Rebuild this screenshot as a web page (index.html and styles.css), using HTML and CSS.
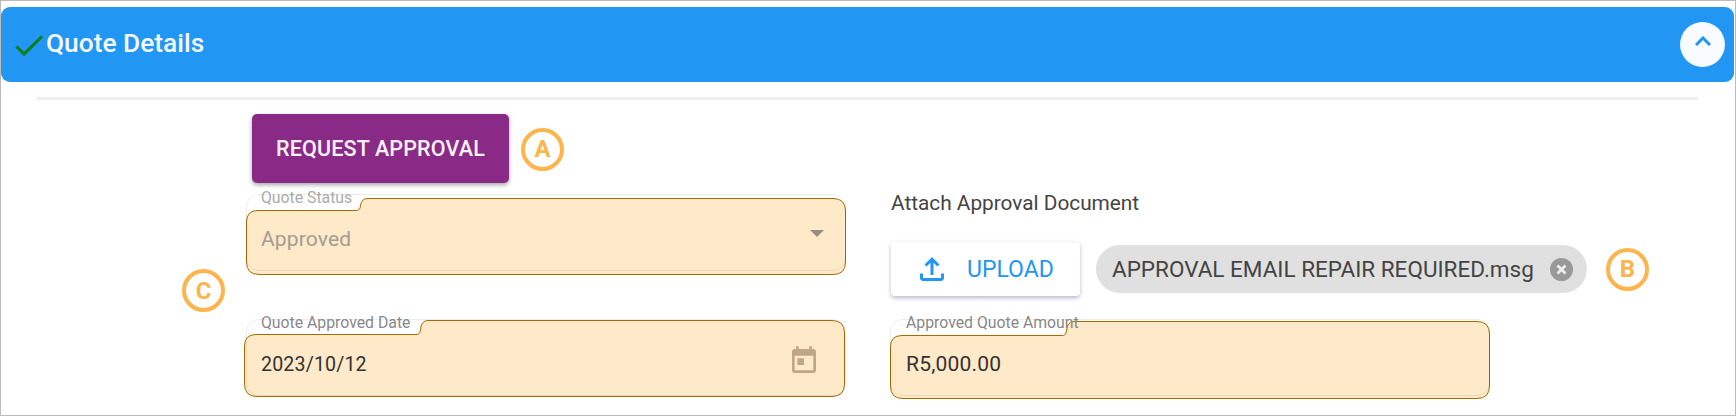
FILE: index.html
```html
<!DOCTYPE html>
<html lang="en">
<head>
    <meta charset="UTF-8">
    <title>Quote Details</title>
    <link rel="stylesheet" href="styles.css">
</head>
<body>
    <div class="page">
        <div class="panel-header">
            <svg class="check" width="28" height="21" viewBox="0 0 28 21"><path d="M1.5 11.5 L9 19 L27 1.5" fill="none" stroke="#0b7d12" stroke-width="3"/></svg>
            <h1 class="panel-title">Quote Details</h1>
            <button class="collapse-btn">
                <svg width="16" height="10" viewBox="0 0 16 10"><path d="M1 9 L8 2 L15 9" fill="none" stroke="#2196f3" stroke-width="3"/></svg>
            </button>
        </div>
        <div class="divider"></div>

        <div class="action-row">
            <button class="request-btn">REQUEST APPROVAL</button>
            <span class="badge">A</span>
        </div>

        <div class="form-grid">
            <div class="badge-cell"><span class="badge">C</span></div>

            <div class="field field-status">
                <svg class="field-shape" width="600" height="85" viewBox="0 0 600 85">
                    <path class="shape-fill" d="M.5 32 Q.5 20.5 12 20.5 H110 Q114 20.5 114.5 16 Q115 8.5 122 8.5 H587 Q599.5 8.5 599.5 21 V72 Q599.5 84.5 587 84.5 H13 Q.5 84.5 .5 72 Z"/>
                    <rect class="shape-outline" x=".5" y="4.5" width="599" height="76" rx="12"/>
                </svg>
                <label class="field-label">Quote Status</label>
                <div class="field-row">
                    <span class="field-value value-status">Approved</span>
                    <svg class="arrow" width="14" height="7" viewBox="0 0 14 7"><path d="M0 0 H14 L7 7 Z" fill="#9a8b84"/></svg>
                </div>
            </div>

            <div class="attach">
                <div class="attach-title">Attach Approval Document</div>
                <div class="attach-row">
                    <button class="upload-btn">
                        <svg width="36" height="36" viewBox="0 0 24 24"><path fill="#2196f3" d="M18 15v3H6v-3H4v3c0 1.1.9 2 2 2h12c1.1 0 2-.9 2-2v-3h-2zM7 9l1.41 1.41L11 7.83V16h2V7.83l2.59 2.58L17 9l-5-5-5 5z"/></svg>
                        <span>UPLOAD</span>
                    </button>
                    <div class="chip">
                        <span class="chip-text">APPROVAL EMAIL REPAIR REQUIRED.msg</span>
                        <svg class="chip-close" width="23" height="23" viewBox="0 0 23 23"><circle cx="11.5" cy="11.5" r="11.5" fill="#999"/><path d="M7.5 7.5 L15.5 15.5 M15.5 7.5 L7.5 15.5" stroke="#eee" stroke-width="2.8"/></svg>
                    </div>
                    <span class="badge">B</span>
                </div>
            </div>

            <div class="field field-date">
                <svg class="field-shape" width="602" height="85" viewBox="0 0 602 85">
                    <path class="shape-fill" d="M.5 31 Q.5 19.5 12 19.5 H172 Q176 19.5 176.5 15 Q177 5.5 184 5.5 H588 Q600.5 5.5 600.5 18 V69 Q600.5 81.5 588 81.5 H13 Q.5 81.5 .5 69 Z"/>
                    <rect class="shape-outline" x="2.5" y="4.5" width="599" height="76" rx="12"/>
                </svg>
                <label class="field-label">Quote Approved Date</label>
                <div class="field-row">
                    <span class="field-value value-date">2023/10/12</span>
                    <svg class="calendar" width="32" height="32" viewBox="0 0 24 24"><path fill="#bfa684" d="M19 3h-1V1h-2v2H8V1H6v2H5c-1.11 0-1.99.9-1.99 2L3 19c0 1.1.89 2 2 2h14c1.1 0 2-.9 2-2V5c0-1.1-.9-2-2-2zm0 16H5V8h14v11zM7 10h5v5H7z"/></svg>
                </div>
            </div>

            <div class="field field-amount">
                <svg class="field-shape" width="600" height="85" viewBox="0 0 600 85">
                    <path class="shape-fill" d="M.5 32 Q.5 20.5 12 20.5 H172 Q176 20.5 176.5 16 Q177 6.5 184 6.5 H587 Q599.5 6.5 599.5 19 V71 Q599.5 83.5 587 83.5 H13 Q.5 83.5 .5 71 Z"/>
                    <rect class="shape-outline" x=".5" y="4.5" width="599" height="76" rx="12"/>
                </svg>
                <label class="field-label">Approved Quote Amount</label>
                <div class="field-row">
                    <span class="field-value value-amount">R5,000.00</span>
                </div>
            </div>
        </div>
    </div>
</body>
</html>
```

FILE: styles.css
```css
* {
    box-sizing: border-box;
}
body {
    margin: 0;
    font-family: Roboto, "Liberation Sans", sans-serif;
    color: #333;
    background: white;
}
button {
    font-family: inherit;
    border: none;
    cursor: pointer;
}
.page {
    height: 416px;
    border: 1px solid #bbb;
    padding-top: 6px;
    overflow: hidden;
}
.panel-header {
    display: flex;
    align-items: center;
    height: 75px;
    margin-right: 1px;
    padding: 0 9px 0 14px;
    background: #2196f3;
    border-radius: 9px;
}
.check {
    margin-right: 3px;
    margin-top: 1px;
}
.panel-title {
    flex: 1;
    margin: 0;
    padding-bottom: 3px;
    font-size: 26.3px;
    font-weight: 500;
    color: #f3f8fd;
}
.collapse-btn {
    display: flex;
    align-items: center;
    justify-content: center;
    width: 45px;
    height: 45px;
    padding: 0 0 7px;
    border-radius: 50%;
    background: #f8fbff;
}
.divider {
    height: 3px;
    margin: 15px 37px 0 36px;
    background: #eee;
}
.action-row {
    display: flex;
    align-items: center;
    gap: 12px;
    margin: 14px 0 0 251px;
}
.request-btn {
    width: 257px;
    height: 69px;
    background: #8a2a87;
    color: #f8f2f8;
    font-size: 21.5px;
    font-weight: 500;
    letter-spacing: .15px;
    border-radius: 5px;
    box-shadow: 0 2px 4px rgba(0, 0, 0, .35);
}
.badge {
    display: flex;
    align-items: center;
    justify-content: center;
    flex: none;
    width: 43px;
    height: 43px;
    border: 4px solid #fdb44b;
    border-radius: 50%;
    color: #fdb44b;
    font-size: 24px;
    font-weight: 700;
}
.action-row .badge {
    margin-top: 1px;
}
.form-grid {
    display: grid;
    grid-template-columns: 62px 647px 1fr;
    grid-template-rows: 107px auto;
    row-gap: 18px;
    margin: 7px 0 0 181px;
}
.badge-cell {
    grid-row: 1 / 3;
    display: flex;
    align-items: center;
    padding-bottom: 9px;
}
.field {
    position: relative;
    height: 85px;
    padding: 0 26px 0 17px;
}
.field-status {
    width: 600px;
    margin-left: 2px;
    padding-left: 15px;
    padding-right: 22px;
}
.field-date {
    width: 602px;
}
.field-amount {
    width: 600px;
    padding-left: 15px;
}
.field-shape {
    position: absolute;
    left: 0;
    top: 0;
}
.field-amount .field-shape {
    left: -1px;
}
.shape-fill {
    fill: #fee9c8;
    stroke: #a86a00;
    stroke-width: 1;
}
.shape-outline {
    fill: none;
    stroke: rgba(0, 0, 0, .07);
    stroke-width: 1;
}
.field-label {
    position: relative;
    display: block;
    font-size: 15.8px;
    line-height: 16px;
    color: #888;
    white-space: nowrap;
}
.field-status .field-label {
    color: #aaa;
}
.field-row {
    position: relative;
    display: flex;
    align-items: center;
    justify-content: space-between;
    height: 24px;
    margin-top: 21px;
}
.field-value {
    color: #333;
}
.value-status {
    font-size: 21px;
    letter-spacing: .15px;
    color: #a39d92;
}
.value-date {
    font-size: 19.6px;
    letter-spacing: .15px;
}
.value-amount {
    font-size: 21px;
    letter-spacing: .2px;
}
.arrow {
    margin-bottom: 12px;
}
.calendar {
    margin-bottom: 6px;
}
.attach-title {
    margin-top: 4px;
    font-size: 20.8px;
    line-height: 18px;
    color: #444;
}
.attach-row {
    display: flex;
    align-items: center;
    margin-top: 30px;
}
.upload-btn {
    display: flex;
    align-items: center;
    gap: 17px;
    width: 189px;
    height: 54px;
    padding: 0 0 0 23px;
    background: white;
    color: #2196f3;
    font-size: 23px;
    border-radius: 4px;
    box-shadow: 0 2px 4px rgba(60, 50, 120, .35);
}
.chip {
    display: flex;
    align-items: center;
    justify-content: space-between;
    width: 491px;
    height: 48px;
    margin-left: 16px;
    padding: 0 14px 0 16px;
    background: #e0e0e0;
    border-radius: 24px;
}
.chip-text {
    font-size: 22.5px;
    color: #444;
    white-space: nowrap;
}
.attach-row .badge {
    margin: 0 0 0 19px;
}
```
